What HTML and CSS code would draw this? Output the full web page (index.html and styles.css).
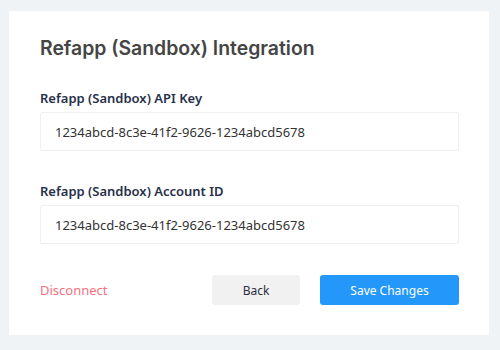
FILE: index.html
```html
<!DOCTYPE html>
<html lang="en">
<head>
  <meta charset="UTF-8" />
  <meta name="viewport" content="width=device-width, initial-scale=1.0"/>
  <title>Refapp (Sandbox) Integration</title>
  <link rel="stylesheet" href="styles.css">
</head>
<body>

  <!-- Integration settings card -->
  <div class="card">
    <h1>Refapp (Sandbox) Integration</h1>

    <div class="field">
      <label for="apiKey">Refapp (Sandbox) API Key</label>
      <input id="apiKey" type="text" value="1234abcd-8c3e-41f2-9626-1234abcd5678" />
    </div>

    <div class="field">
      <label for="accountId">Refapp (Sandbox) Account ID</label>
      <input id="accountId" type="text" value="1234abcd-8c3e-41f2-9626-1234abcd5678" />
    </div>

    <div class="actions">
      <a href="#" class="disconnect">Disconnect</a>
      <div class="buttons">
        <button class="btn btn-back">Back</button>
        <button class="btn btn-save">Save Changes</button>
      </div>
    </div>
  </div>

</body>
</html>
```

FILE: styles.css
```css
body {
  margin: 0;
  padding: 11px 11px 15px 9px;
  font-family: 'Noto Sans', 'Open Sans', sans-serif;
  background: #f0f3f6;
  color: #333;
}

.card {
  background: #fff;
  width: 480px;
  height: 324px;
  box-sizing: border-box;
  padding: 25px 30px 0 31px;
}

h1 {
  font-family: 'Inter', sans-serif;
  font-size: 19.4px;
  font-weight: 600;
  line-height: 24px;
  color: #454545;
  margin: 0 0 29px;
}

.field {
  display: flex;
  flex-direction: column;
  margin-bottom: 31px;
}

.field label {
  font-size: 13px;
  font-weight: 600;
  line-height: 18px;
  color: #27304a;
  margin-bottom: 5px;
}

.field input {
  height: 39px;
  box-sizing: border-box;
  border: 1px solid #f0f0f0;
  border-radius: 2px;
  padding: 0 14px;
  font-family: 'Noto Sans', sans-serif;
  font-size: 13px;
  color: #333;
  outline: none;
}

.actions {
  display: flex;
  align-items: center;
  justify-content: space-between;
}

.disconnect {
  font-size: 13px;
  color: #f7707f;
  text-decoration: none;
}

.buttons {
  display: flex;
  gap: 20px;
}

.btn {
  height: 30px;
  border: none;
  border-radius: 3px;
  font-family: 'Noto Sans', sans-serif;
  font-size: 12px;
  cursor: pointer;
}

.btn-back {
  width: 88px;
  background: #f1f1f1;
  color: #2b3042;
}

.btn-save {
  width: 139px;
  background: #2497fb;
  color: #fff;
}
```
